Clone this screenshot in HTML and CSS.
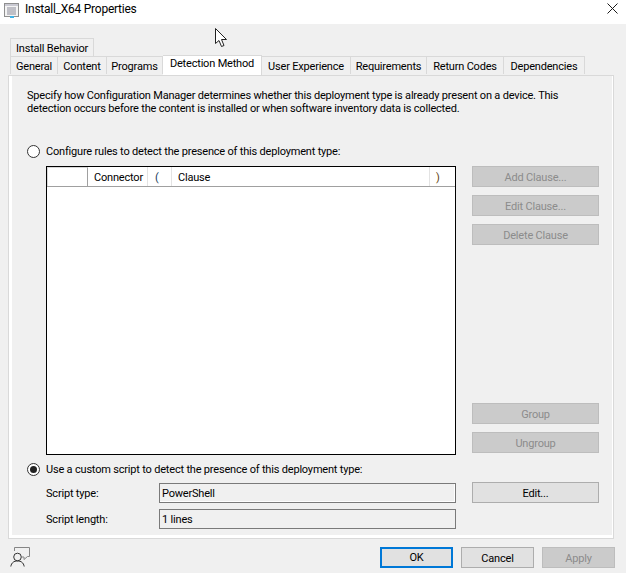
FILE: index.html
```html
<!DOCTYPE html>
<html lang="en">
<head>
<meta charset="utf-8">
<title>Install_X64 Properties</title>
<link rel="stylesheet" href="styles.css">
</head>
<body>
<div class="window">
  <header class="titlebar">
    <svg class="title-icon" width="16" height="16" viewBox="0 0 16 16">
      <rect x="0.5" y="0.5" width="14" height="13" fill="#f4f4f4" stroke="#8f8f8f"/>
      <rect x="1" y="1" width="13" height="2" fill="#c9c9d2"/>
      <path d="M3 5h9M3 7h9M3 9h9M3 11h9" stroke="#8b8b99" fill="none"/>
      <rect x="6" y="13" width="4" height="2" fill="#3fb2e6"/>
    </svg>
    <span class="title-text">Install_X64 Properties</span>
    <svg class="close-icon" width="11" height="11" viewBox="0 0 11 11">
      <path d="M0.5 0.5L10.5 10.5M10.5 0.5L0.5 10.5" stroke="#1a1a1a" fill="none"/>
    </svg>
  </header>

  <div class="tabs">
    <div class="tab-row tab-row-top">
      <div class="tab tab-behavior">Install Behavior</div>
    </div>
    <div class="tab-row">
      <div class="tab tab-general">General</div>
      <div class="tab tab-content">Content</div>
      <div class="tab tab-programs">Programs</div>
      <div class="tab tab-active">Detection Method</div>
      <div class="tab tab-ux">User Experience</div>
      <div class="tab tab-req">Requirements</div>
      <div class="tab tab-codes">Return Codes</div>
      <div class="tab tab-dep">Dependencies</div>
    </div>
  </div>

  <main class="panel">
    <p class="intro">Specify how Configuration Manager determines whether this deployment type is already present on a device. This<br>detection occurs before the content is installed or when software inventory data is collected.</p>

    <label class="radio-line radio-rules"><span class="radio"></span>Configure rules to detect the presence of this deployment type:</label>

    <div class="rules">
      <div class="list">
        <div class="list-head">
          <div class="col col-blank"></div>
          <div class="col col-connector">Connector</div>
          <div class="col col-open">(</div>
          <div class="col col-clause">Clause</div>
          <div class="col col-close">)</div>
        </div>
      </div>
      <div class="side">
        <div class="side-group">
          <button class="btn btn-disabled">Add Clause...</button>
          <button class="btn btn-disabled">Edit Clause...</button>
          <button class="btn btn-disabled">Delete Clause</button>
        </div>
        <div class="side-group">
          <button class="btn btn-disabled">Group</button>
          <button class="btn btn-disabled">Ungroup</button>
        </div>
      </div>
    </div>

    <label class="radio-line radio-script"><span class="radio radio-on"></span>Use a custom script to detect the presence of this deployment type:</label>

    <div class="script">
      <div class="fields">
        <div class="field-row"><span class="field-label">Script type:</span><span class="field field-first">PowerShell</span></div>
        <div class="field-row"><span class="field-label">Script length:</span><span class="field">1 lines</span></div>
      </div>
      <button class="btn btn-edit">Edit...</button>
    </div>
  </main>

  <footer class="footer">
    <svg class="user-icon" width="21" height="21" viewBox="0 0 21 21">
      <path d="M4.5 4V0.5H19.5V9.5H17.5L14 12.5V10H12" fill="none" stroke="#858585"/>
      <circle cx="7.5" cy="10" r="3.8" fill="#f0f0f0" stroke="#333"/>
      <path d="M0.8 19.5C1.5 15.5 4 14 7.5 14S13.5 15.5 14.2 19.5" fill="none" stroke="#333"/>
    </svg>
    <div class="footer-buttons">
      <button class="btn btn-foot btn-ok">OK</button>
      <button class="btn btn-foot">Cancel</button>
      <button class="btn btn-foot btn-disabled">Apply</button>
    </div>
  </footer>

  <svg class="cursor" width="13" height="20" viewBox="0 0 13 20">
    <path d="M0.5 0.5V15.5L4 12.5L6.5 18.5L9 17.5L6.5 11.5H11.5Z" fill="#fff" stroke="#222"/>
  </svg>
</div>
</body>
</html>
```
FILE: styles.css
```css
* { box-sizing: border-box; }
html, body { margin: 0; padding: 0; }
body {
  width: 626px;
  height: 573px;
  overflow: hidden;
  background: #f0f0f0;
  font-family: Roboto, "Noto Sans", sans-serif;
  font-size: 11px;
  letter-spacing: -0.19px;
  color: #000;
}
.window { position: relative; width: 626px; height: 573px; display: flex; flex-direction: column; }

.titlebar {
  height: 24px;
  background: #fff;
  display: flex;
  align-items: center;
  padding: 0 8px 0 4px;
}
.title-icon { flex: none; margin-top: -2px; }
.title-text { margin-left: 5px; font-size: 12px; letter-spacing: -0.25px; margin-top: -7px; }
.close-icon { margin-left: auto; margin-top: -7px; }

.tabs { padding: 14px 0 0 10px; height: 51px; }
.tab-row { display: flex; height: 18px; align-items: flex-end; }
.tab {
  height: 18px;
  border: 1px solid #d9d9d9;
  border-bottom: 0;
  border-left-width: 0;
  background: #f0f0f0;
  text-align: center;
  line-height: 19px;
  white-space: nowrap;
  flex: none;
}
.tab-behavior { width: 84px; border-left-width: 1px; }
.tab-general { width: 48px; border-left-width: 1px; }
.tab-content { width: 49px; }
.tab-programs { width: 56px; }
.tab-active {
  width: 99px;
  height: 20px;
  margin-bottom: -1px;
  background: #fff;
  position: relative;
  z-index: 1;
  line-height: 16px;
}
.tab-ux { width: 89px; }
.tab-req { width: 76px; }
.tab-codes { width: 77px; }
.tab-dep { width: 81px; }

.panel {
  width: 606px;
  height: 464px;
  margin-left: 8px;
  border: 1px solid #d9d9d9;
  box-shadow: inset 3px 0 0 #fff, inset 0 -3px 0 #fff, inset -1px 0 0 #fff;
  padding: 13px 14px 0 18px;
  display: flex;
  flex-direction: column;
}
.intro { margin: 0; line-height: 13px; white-space: nowrap; }

.radio-line { display: flex; align-items: center; height: 16px; }
.radio-rules { margin: 28px 0 0 0; }
.radio-script { margin: 6px 0 0 0; }
.radio {
  width: 13px;
  height: 13px;
  border: 1px solid #333;
  border-radius: 50%;
  background: #fff;
  margin-right: 6px;
  flex: none;
  position: relative;
}
.radio-on::after {
  content: "";
  position: absolute;
  left: 2px;
  top: 2px;
  width: 7px;
  height: 7px;
  border-radius: 50%;
  background: #222;
}

.rules { display: flex; margin: 7px 0 0 19px; height: 289px; }
.list { width: 410px; border: 1px solid #000; background: #fff; }
.list-head { display: flex; height: 20px; border-bottom: 1px solid #a0a0a0; line-height: 21px; }
.col { border-right: 1px solid #e3e3e3; padding-left: 6px; flex: none; white-space: nowrap; }
.col-blank { width: 41px; border-right-color: #a0a0a0; border-left: 1px solid #d9d9d9; border-top: 1px solid #d9d9d9; }
.col-connector { width: 60px; }
.col-open { width: 24px; padding-left: 7px; color: #17395c; }
.col-clause { width: 258px; }
.col-close { width: 25px; padding-left: 6px; border-right: 0; color: #5f3f10; }

.side { margin-left: 16px; width: 127px; padding-bottom: 2px; display: flex; flex-direction: column; justify-content: space-between; }
.side-group { display: flex; flex-direction: column; gap: 8px; }

.btn {
  display: block;
  width: 127px;
  height: 21px;
  padding: 2px 0 0;
  border: 1px solid #adadad;
  background: #e1e1e1;
  font: inherit;
  letter-spacing: inherit;
  color: #000;
  text-align: center;
  line-height: 16px;
}
.btn-disabled { background: #cbcbcb; border-color: #bdbdbd; color: #8c8c8c; }

.script { display: flex; margin: 5px 0 0 19px; }
.fields { width: 410px; display: flex; flex-direction: column; gap: 6px; margin-top: 1px; }
.field-row { display: flex; align-items: center; height: 20px; }
.field-label { width: 113px; flex: none; }
.field {
  flex: 1;
  height: 20px;
  border: 1px solid #7a7a7a;
  padding-left: 2px;
  line-height: 20px;
}
.field-first { box-shadow: inset -1px -1px 0 #fff; }
.btn-edit { margin-left: 16px; }

.footer {
  display: flex;
  align-items: flex-start;
  justify-content: space-between;
  padding: 8px 11px 0 10px;
}
.user-icon { flex: none; }
.footer-buttons { display: flex; gap: 8px; }
.btn-foot { width: 73px; }
.btn-ok { width: 73px; border: 2px solid #0078d7; padding-top: 1px; }

.cursor { position: absolute; left: 215px; top: 28px; }
```
